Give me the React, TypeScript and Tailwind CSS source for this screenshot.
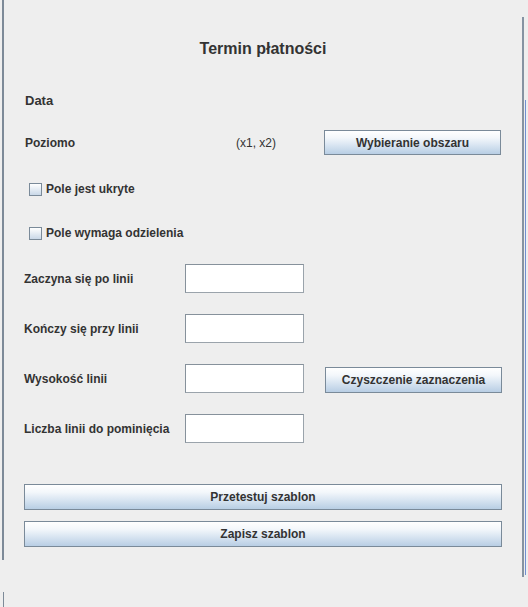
import React from "react";

const btn =
  "h-full border border-[#7a8a99] bg-[linear-gradient(to_bottom,#ffffff_0%,#f3f7fb_30%,#dae6f2_60%,#b8cee4_100%)] text-[12px] font-bold text-[#333333] flex items-center justify-center";

function Check({ label }: { label: string }) {
  return (
    <div className="h-[20px] flex items-center pl-[25px]">
      <span className="w-[13px] h-[13px] border border-[#7a8a99] bg-[linear-gradient(to_bottom,#ffffff,#c9d8e8)]" />
      <span className="ml-[4px] text-[12px] font-bold text-[#333333]">{label}</span>
    </div>
  );
}

function Pole({ label, children }: { label: string; children?: React.ReactNode }) {
  return (
    <div className="h-[29px] flex items-center">
      <span className="w-[181px] pl-[20px] text-[12px] font-bold text-[#333333]">{label}</span>
      <div className="w-[119px] h-[29px] border border-[#86919b] border-r-[#9aa3ab] border-b-[#9aa3ab] bg-white" />
      {children}
    </div>
  );
}

export default function App() {
  return (
    <div
      className="w-[528px] h-[607px] bg-[#eeeeee] flex overflow-hidden"
      style={{ fontFamily: '"Liberation Sans", Arial, sans-serif' }}
    >
      <div className="w-[2px]" />
      <div className="w-[2px] flex flex-col">
        <div className="h-[560px] bg-[#7d8a98]" />
        <div className="h-[32px]" />
        <div className="ml-[1px] w-[1px] h-[15px] bg-[#7d8a98]" />
      </div>

      <div className="w-[518px] flex flex-col">
        <div className="mt-[39px] h-[20px] flex items-center justify-center text-[16px] font-bold text-[#333333]">
          Termin płatności
        </div>

        <div className="mt-[34px] h-[16px] flex items-center pl-[21px] text-[13px] font-bold text-[#333333]">
          Data
        </div>

        <div className="mt-[21px] h-[25px] flex items-center">
          <span className="w-[232px] pl-[21px] text-[12px] font-bold text-[#333333]">Poziomo</span>
          <span className="w-[88px] text-[12px] text-[#333333]">(x1, x2)</span>
          <div className="w-[177px] h-[25px]">
            <button className={`w-full ${btn}`}>Wybieranie obszaru</button>
          </div>
        </div>

        <div className="mt-[24px] flex flex-col gap-[24px]">
          <Check label="Pole jest ukryte" />
          <Check label="Pole wymaga odzielenia" />
        </div>

        <div className="mt-[21px] flex flex-col gap-[21px]">
          <Pole label="Zaczyna się po linii" />
          <Pole label="Kończy się przy linii" />
          <Pole label="Wysokość linii">
            <div className="ml-[21px] mt-[3px] w-[177px] h-[26px]">
              <button className={`w-full ${btn}`}>Czyszczenie zaznaczenia</button>
            </div>
          </Pole>
          <Pole label="Liczba linii do pominięcia" />
        </div>

        <div className="mt-[41px] flex flex-col gap-[11px] pl-[20px] pr-[20px]">
          <div className="h-[26px]">
            <button className={`w-full ${btn}`}>Przetestuj szablon</button>
          </div>
          <div className="h-[26px]">
            <button className={`w-full ${btn}`}>Zapisz szablon</button>
          </div>
        </div>
      </div>

      <div className="w-[2px] flex flex-col">
        <div className="mt-[17px] h-[560px] bg-[#8593a2]" />
      </div>
      <div className="w-[4px] flex flex-col">
        <div className="mt-[100px] ml-[1px] w-[1px] h-[475px] bg-[#6f8fd0]" />
      </div>
    </div>
  );
}
